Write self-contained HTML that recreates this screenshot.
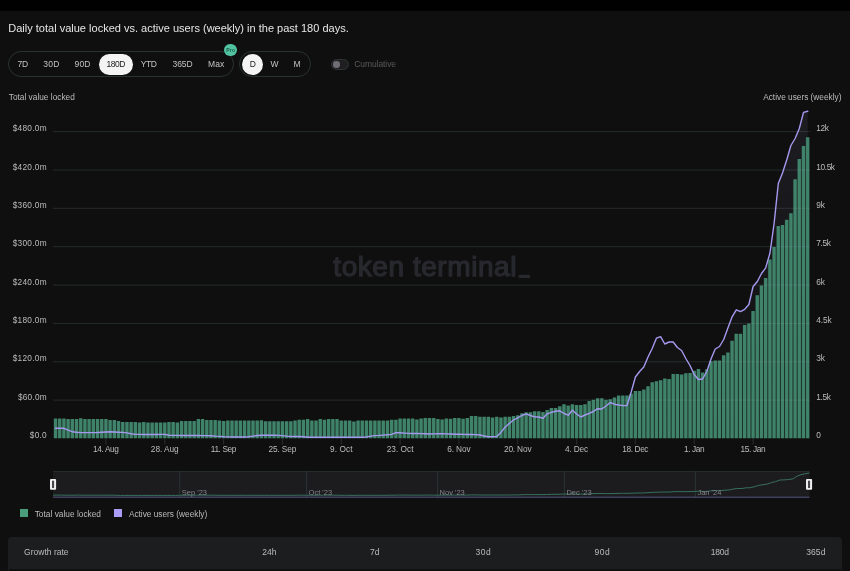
<!DOCTYPE html>
<html lang="en"><head><meta charset="utf-8"><title>Token Terminal – TVL vs active users</title>
<style>
html,body{margin:0;padding:0;background:#0f0f0f;}
body{width:850px;height:571px;position:relative;overflow:hidden;font-family:"Liberation Sans", sans-serif;}
.topbar{position:absolute;left:0;top:0;width:850px;height:10.6px;background:#010101;}
.t{position:absolute;white-space:nowrap;line-height:normal;font-family:"Liberation Sans", sans-serif;}
.chart{position:absolute;left:0;top:0;}
#t_wm{-webkit-text-stroke:1.25px #28292f;}
.labels{position:absolute;left:0;top:0;width:850px;height:571px;will-change:transform;transform:translateZ(0);}
.pill{position:absolute;box-sizing:border-box;border:1px solid #2a3232;border-radius:13px;}
.sel{position:absolute;background:#f4f4f4;border-radius:11px;}
.pro{position:absolute;left:223.7px;top:44.2px;width:13.7px;height:11.7px;border-radius:6px;background:#52c3a0;}
.toggle{position:absolute;left:331.2px;top:59.3px;width:17.6px;height:10.6px;box-sizing:border-box;border:1px solid #2c3534;border-radius:6px;background:#1f1f21;}
.knob{position:absolute;left:333.1px;top:61.3px;width:6.6px;height:6.6px;border-radius:50%;background:#706e74;}
.sq{position:absolute;top:508.9px;width:8px;height:8px;}
.table{position:absolute;left:8px;top:537px;width:834px;height:32px;background:#1c1d1f;border-radius:4px 4px 0 0;}
.sep{position:absolute;left:8px;top:569px;width:834px;height:4px;box-sizing:border-box;border-left:1px solid #1c1d1f;border-right:1px solid #1c1d1f;}
</style></head>
<body>
<div class="topbar"></div>
<svg class="chart" width="850" height="571" viewBox="0 0 850 571">
<defs><linearGradient id="ag" gradientUnits="userSpaceOnUse" x1="0" y1="111" x2="0" y2="438.5"><stop offset="0" stop-color="#b5b0e8" stop-opacity="0.085"/><stop offset="1" stop-color="#b5b0e8" stop-opacity="0"/></linearGradient></defs>
<path d="M55.5 428.3L59.7 428.3L63.9 428.3L68.1 430.2L72.3 431.7L76.5 432.2L80.7 432.6L84.9 432.6L89.1 432.6L93.3 432.6L97.5 432.5L101.7 432.2L105.9 432.0L110.1 431.8L114.3 432.0L118.5 432.2L122.7 432.4L126.9 432.9L131.1 433.7L135.3 434.4L139.5 434.4L143.7 434.5L147.9 434.5L152.2 434.5L156.4 434.5L160.6 434.4L164.8 434.4L169.0 435.2L173.2 435.4L177.4 435.4L181.6 435.5L185.8 435.5L190.0 435.5L194.2 435.5L198.4 435.5L202.6 435.6L206.8 435.6L211.0 435.7L215.2 436.1L219.4 436.4L223.6 436.7L227.8 436.9L232.0 437.0L236.2 437.0L240.4 437.0L244.6 437.0L248.8 436.7L253.0 436.1L257.2 435.5L261.4 435.3L265.6 435.2L269.8 435.2L274.0 435.2L278.2 435.4L282.4 435.6L286.6 436.1L290.8 436.5L295.0 436.5L299.2 436.5L303.4 436.8L307.6 437.2L311.8 437.2L316.0 437.2L320.2 437.2L324.4 437.2L328.6 437.2L332.8 437.3L337.0 437.3L341.3 437.3L345.5 437.3L349.7 437.3L353.9 437.3L358.1 437.3L362.3 437.3L366.5 437.0L370.7 436.1L374.9 435.6L379.1 435.4L383.3 435.1L387.5 434.8L391.7 434.4L395.9 432.6L400.1 432.8L404.3 433.1L408.5 433.4L412.7 433.5L416.9 433.5L421.1 433.6L425.3 433.8L429.5 434.0L433.7 433.9L437.9 433.8L442.1 433.8L446.3 433.9L450.5 434.0L454.7 434.2L458.9 434.2L463.1 434.4L467.3 434.5L471.5 434.5L475.7 434.6L479.9 435.0L484.1 436.0L488.3 436.7L492.5 436.8L496.7 436.6L500.9 432.4L505.1 427.3L509.3 423.5L513.5 420.0L517.7 417.8L521.9 415.5L526.1 413.8L530.4 415.5L534.6 416.9L538.8 417.0L543.0 418.3L547.2 413.8L551.4 412.4L555.6 411.3L559.8 410.8L564.0 413.5L568.2 415.2L572.4 410.3L576.6 414.0L580.8 417.0L585.0 415.0L589.2 413.3L593.4 411.5L597.6 408.7L601.8 409.0L606.0 406.0L610.2 402.5L614.4 404.2L618.6 405.0L622.8 405.6L627.0 405.5L631.2 392.0L635.4 377.0L639.6 371.5L643.8 367.0L648.0 357.0L652.2 348.5L656.4 338.2L660.6 336.6L664.8 344.0L669.0 342.0L673.2 342.0L677.4 347.5L681.6 350.5L685.8 358.5L690.0 365.5L694.2 374.5L698.4 379.5L702.6 379.0L706.8 371.5L711.0 359.0L715.2 349.0L719.5 346.5L723.7 339.5L727.9 328.0L732.1 316.8L736.3 309.8L740.5 311.6L744.7 309.3L748.9 304.5L753.1 286.5L757.3 281.5L761.5 273.5L765.7 267.8L769.9 253.3L774.1 223.5L778.3 183.5L782.5 173.0L786.7 160.0L790.9 145.5L795.1 138.5L799.3 128.5L803.5 112.4L807.7 111.3L807.7 438.5L55.5 438.5z" fill="url(#ag)"/>
<g class="bars"><path d="M53.85 438.3V418.9H57.60V418.9H61.80V418.9H66.01V419.5H70.21V419.5H74.41V419.5H78.61V418.7H82.82V419.5H87.02V419.5H91.22V419.5H95.42V419.5H99.62V419.5H103.83V419.5H108.03V420.4H112.23V420.4H116.43V421.5H120.64V422.4H124.84V422.4H129.04V422.4H133.24V422.4H137.44V423.0H141.65V422.4H145.85V423.0H150.05V423.0H154.25V423.0H158.46V423.0H162.66V423.0H166.86V422.4H171.06V422.4H175.26V423.0H179.47V421.5H183.67V421.5H187.87V421.5H192.07V421.5H196.28V419.5H200.48V419.5H204.68V420.4H208.88V420.4H213.08V420.4H217.29V421.0H221.49V421.5H225.69V420.9H229.89V420.9H234.10V420.9H238.30V420.9H242.50V420.9H246.70V420.9H250.90V420.9H255.11V420.9H259.31V420.7H263.51V421.6H267.71V421.6H271.92V421.6H276.12V421.6H280.32V421.6H284.52V421.6H288.72V421.6H292.93V420.9H297.13V420.2H301.33V420.2H305.53V419.5H309.74V420.9H313.94V420.9H318.14V419.5H322.34V420.2H326.54V419.5H330.75V419.5H334.95V419.5H339.15V420.9H343.35V420.9H347.56V420.9H351.76V421.9H355.96V420.9H360.16V420.9H364.36V420.9H368.57V420.9H372.77V420.9H376.97V420.9H381.17V420.9H385.38V420.9H389.58V420.2H393.78V420.2H397.98V419.0H402.18V419.0H406.39V419.0H410.59V419.0H414.79V419.8H418.99V419.0H423.20V418.3H427.40V418.3H431.60V418.3H435.80V419.3H440.00V419.8H444.21V419.0H448.41V419.2H452.61V418.5H456.81V418.5H461.02V419.2H465.22V418.5H469.42V416.3H473.62V416.3H477.82V417.2H482.03V417.2H486.23V417.2H490.43V417.8H494.63V417.2H498.84V417.8H503.04V417.2H507.24V417.2H511.44V416.3H515.64V415.6H519.85V413.6H524.05V412.7H528.25V412.7H532.45V411.6H536.66V411.6H540.86V412.5H545.06V410.5H549.26V408.5H553.46V408.5H557.67V406.7H561.87V404.6H566.07V406.0H570.27V404.6H574.48V405.3H578.68V405.3H582.88V404.6H587.08V401.5H591.28V400.1H595.49V398.6H599.69V398.6H603.89V400.1H608.09V399.7H612.30V397.9H616.50V395.9H620.70V395.9H624.90V395.9H629.10V394.1H633.31V391.4H637.51V391.4H641.71V390.0H645.91V386.6H650.12V382.7H654.32V381.6H658.52V380.6H662.72V378.8H666.92V379.5H671.13V374.3H675.33V374.3H679.53V375.0H683.73V373.6H687.94V373.3H692.14V371.1H696.34V369.4H700.54V372.9H704.74V369.7H708.95V361.7H713.15V361.0H717.35V361.0H721.55V355.7H725.76V353.0H729.96V341.1H734.16V334.1H738.36V334.1H742.56V325.4H746.77V324.0H750.97V311.4H755.17V295.6H759.37V285.8H763.58V278.5H767.78V259.8H771.98V247.5H776.18V226.5H780.38V225.5H784.59V220.2H788.79V213.6H792.99V179.7H797.19V159.3H801.40V146.4H805.60V137.7H809.35V438.3z" fill="#40836b" fill-opacity="0.2"/><path d="M53.85 438.3V418.5h3.3V438.3zM58.05 438.3V418.5h3.3V438.3zM62.26 438.3V418.5h3.3V438.3zM66.46 438.3V419.1h3.3V438.3zM70.66 438.3V419.1h3.3V438.3zM74.86 438.3V419.1h3.3V438.3zM79.06 438.3V418.3h3.3V438.3zM83.27 438.3V419.1h3.3V438.3zM87.47 438.3V419.1h3.3V438.3zM91.67 438.3V419.1h3.3V438.3zM95.87 438.3V419.1h3.3V438.3zM100.08 438.3V419.1h3.3V438.3zM104.28 438.3V419.1h3.3V438.3zM108.48 438.3V420.0h3.3V438.3zM112.68 438.3V420.0h3.3V438.3zM116.88 438.3V421.1h3.3V438.3zM121.09 438.3V422.0h3.3V438.3zM125.29 438.3V422.0h3.3V438.3zM129.49 438.3V422.0h3.3V438.3zM133.69 438.3V422.0h3.3V438.3zM137.90 438.3V422.6h3.3V438.3zM142.10 438.3V422.0h3.3V438.3zM146.30 438.3V422.6h3.3V438.3zM150.50 438.3V422.6h3.3V438.3zM154.70 438.3V422.6h3.3V438.3zM158.91 438.3V422.6h3.3V438.3zM163.11 438.3V422.6h3.3V438.3zM167.31 438.3V422.0h3.3V438.3zM171.51 438.3V422.0h3.3V438.3zM175.72 438.3V422.6h3.3V438.3zM179.92 438.3V421.1h3.3V438.3zM184.12 438.3V421.1h3.3V438.3zM188.32 438.3V421.1h3.3V438.3zM192.52 438.3V421.1h3.3V438.3zM196.73 438.3V419.1h3.3V438.3zM200.93 438.3V419.1h3.3V438.3zM205.13 438.3V420.0h3.3V438.3zM209.33 438.3V420.0h3.3V438.3zM213.54 438.3V420.0h3.3V438.3zM217.74 438.3V420.6h3.3V438.3zM221.94 438.3V421.1h3.3V438.3zM226.14 438.3V420.5h3.3V438.3zM230.34 438.3V420.5h3.3V438.3zM234.55 438.3V420.5h3.3V438.3zM238.75 438.3V420.5h3.3V438.3zM242.95 438.3V420.5h3.3V438.3zM247.15 438.3V420.5h3.3V438.3zM251.36 438.3V420.5h3.3V438.3zM255.56 438.3V420.5h3.3V438.3zM259.76 438.3V420.3h3.3V438.3zM263.96 438.3V421.2h3.3V438.3zM268.16 438.3V421.2h3.3V438.3zM272.37 438.3V421.2h3.3V438.3zM276.57 438.3V421.2h3.3V438.3zM280.77 438.3V421.2h3.3V438.3zM284.97 438.3V421.2h3.3V438.3zM289.18 438.3V421.2h3.3V438.3zM293.38 438.3V420.5h3.3V438.3zM297.58 438.3V419.8h3.3V438.3zM301.78 438.3V419.8h3.3V438.3zM305.98 438.3V419.1h3.3V438.3zM310.19 438.3V420.5h3.3V438.3zM314.39 438.3V420.5h3.3V438.3zM318.59 438.3V419.1h3.3V438.3zM322.79 438.3V419.8h3.3V438.3zM327.00 438.3V419.1h3.3V438.3zM331.20 438.3V419.1h3.3V438.3zM335.40 438.3V419.1h3.3V438.3zM339.60 438.3V420.5h3.3V438.3zM343.80 438.3V420.5h3.3V438.3zM348.01 438.3V420.5h3.3V438.3zM352.21 438.3V421.5h3.3V438.3zM356.41 438.3V420.5h3.3V438.3zM360.61 438.3V420.5h3.3V438.3zM364.82 438.3V420.5h3.3V438.3zM369.02 438.3V420.5h3.3V438.3zM373.22 438.3V420.5h3.3V438.3zM377.42 438.3V420.5h3.3V438.3zM381.62 438.3V420.5h3.3V438.3zM385.83 438.3V420.5h3.3V438.3zM390.03 438.3V419.8h3.3V438.3zM394.23 438.3V419.8h3.3V438.3zM398.43 438.3V418.6h3.3V438.3zM402.64 438.3V418.6h3.3V438.3zM406.84 438.3V418.6h3.3V438.3zM411.04 438.3V418.6h3.3V438.3zM415.24 438.3V419.4h3.3V438.3zM419.44 438.3V418.6h3.3V438.3zM423.65 438.3V417.9h3.3V438.3zM427.85 438.3V417.9h3.3V438.3zM432.05 438.3V417.9h3.3V438.3zM436.25 438.3V418.9h3.3V438.3zM440.46 438.3V419.4h3.3V438.3zM444.66 438.3V418.6h3.3V438.3zM448.86 438.3V418.8h3.3V438.3zM453.06 438.3V418.1h3.3V438.3zM457.26 438.3V418.1h3.3V438.3zM461.47 438.3V418.8h3.3V438.3zM465.67 438.3V418.1h3.3V438.3zM469.87 438.3V415.9h3.3V438.3zM474.07 438.3V415.9h3.3V438.3zM478.28 438.3V416.8h3.3V438.3zM482.48 438.3V416.8h3.3V438.3zM486.68 438.3V416.8h3.3V438.3zM490.88 438.3V417.4h3.3V438.3zM495.08 438.3V416.8h3.3V438.3zM499.29 438.3V417.4h3.3V438.3zM503.49 438.3V416.8h3.3V438.3zM507.69 438.3V416.8h3.3V438.3zM511.89 438.3V415.9h3.3V438.3zM516.10 438.3V415.2h3.3V438.3zM520.30 438.3V413.2h3.3V438.3zM524.50 438.3V412.3h3.3V438.3zM528.70 438.3V412.3h3.3V438.3zM532.90 438.3V411.2h3.3V438.3zM537.11 438.3V411.2h3.3V438.3zM541.31 438.3V412.1h3.3V438.3zM545.51 438.3V410.1h3.3V438.3zM549.71 438.3V408.1h3.3V438.3zM553.92 438.3V408.1h3.3V438.3zM558.12 438.3V406.3h3.3V438.3zM562.32 438.3V404.2h3.3V438.3zM566.52 438.3V405.6h3.3V438.3zM570.72 438.3V404.2h3.3V438.3zM574.93 438.3V404.9h3.3V438.3zM579.13 438.3V404.9h3.3V438.3zM583.33 438.3V404.2h3.3V438.3zM587.53 438.3V401.1h3.3V438.3zM591.74 438.3V399.7h3.3V438.3zM595.94 438.3V398.2h3.3V438.3zM600.14 438.3V398.2h3.3V438.3zM604.34 438.3V399.7h3.3V438.3zM608.54 438.3V399.3h3.3V438.3zM612.75 438.3V397.5h3.3V438.3zM616.95 438.3V395.5h3.3V438.3zM621.15 438.3V395.5h3.3V438.3zM625.35 438.3V395.5h3.3V438.3zM629.56 438.3V393.7h3.3V438.3zM633.76 438.3V391.0h3.3V438.3zM637.96 438.3V391.0h3.3V438.3zM642.16 438.3V389.6h3.3V438.3zM646.36 438.3V386.2h3.3V438.3zM650.57 438.3V382.3h3.3V438.3zM654.77 438.3V381.2h3.3V438.3zM658.97 438.3V380.2h3.3V438.3zM663.17 438.3V378.4h3.3V438.3zM667.38 438.3V379.1h3.3V438.3zM671.58 438.3V373.9h3.3V438.3zM675.78 438.3V373.9h3.3V438.3zM679.98 438.3V374.6h3.3V438.3zM684.18 438.3V373.2h3.3V438.3zM688.39 438.3V372.9h3.3V438.3zM692.59 438.3V370.7h3.3V438.3zM696.79 438.3V369.0h3.3V438.3zM700.99 438.3V372.5h3.3V438.3zM705.20 438.3V369.3h3.3V438.3zM709.40 438.3V361.3h3.3V438.3zM713.60 438.3V360.6h3.3V438.3zM717.80 438.3V360.6h3.3V438.3zM722.00 438.3V355.3h3.3V438.3zM726.21 438.3V352.6h3.3V438.3zM730.41 438.3V340.7h3.3V438.3zM734.61 438.3V333.7h3.3V438.3zM738.81 438.3V333.7h3.3V438.3zM743.02 438.3V325.0h3.3V438.3zM747.22 438.3V323.6h3.3V438.3zM751.42 438.3V311.0h3.3V438.3zM755.62 438.3V295.2h3.3V438.3zM759.82 438.3V285.4h3.3V438.3zM764.03 438.3V278.1h3.3V438.3zM768.23 438.3V259.4h3.3V438.3zM772.43 438.3V247.1h3.3V438.3zM776.63 438.3V226.1h3.3V438.3zM780.84 438.3V225.1h3.3V438.3zM785.04 438.3V219.8h3.3V438.3zM789.24 438.3V213.2h3.3V438.3zM793.44 438.3V179.3h3.3V438.3zM797.64 438.3V158.9h3.3V438.3zM801.85 438.3V146.0h3.3V438.3zM806.05 438.3V137.3h3.3V438.3z" fill="#40836b"/></g>
<g stroke="#8caab0" stroke-opacity="0.18" stroke-width="1" fill="none"><path d="M53 400.1H810"/><path d="M53 361.8H810"/><path d="M53 323.4H810"/><path d="M53 285.1H810"/><path d="M53 246.7H810"/><path d="M53 208.3H810"/><path d="M53 170.0H810"/><path d="M53 131.6H810"/></g>
<g stroke="#2a2e30" stroke-width="1" fill="none"><path d="M105.9 438.5v6"/><path d="M164.8 438.5v6"/><path d="M223.6 438.5v6"/><path d="M282.4 438.5v6"/><path d="M341.3 438.5v6"/><path d="M400.1 438.5v6"/><path d="M458.9 438.5v6"/><path d="M517.7 438.5v6"/><path d="M576.6 438.5v6"/><path d="M635.4 438.5v6"/><path d="M694.2 438.5v6"/><path d="M753.1 438.5v6"/></g>
<path d="M55.5 428.3L59.7 428.3L63.9 428.3L68.1 430.2L72.3 431.7L76.5 432.2L80.7 432.6L84.9 432.6L89.1 432.6L93.3 432.6L97.5 432.5L101.7 432.2L105.9 432.0L110.1 431.8L114.3 432.0L118.5 432.2L122.7 432.4L126.9 432.9L131.1 433.7L135.3 434.4L139.5 434.4L143.7 434.5L147.9 434.5L152.2 434.5L156.4 434.5L160.6 434.4L164.8 434.4L169.0 435.2L173.2 435.4L177.4 435.4L181.6 435.5L185.8 435.5L190.0 435.5L194.2 435.5L198.4 435.5L202.6 435.6L206.8 435.6L211.0 435.7L215.2 436.1L219.4 436.4L223.6 436.7L227.8 436.9L232.0 437.0L236.2 437.0L240.4 437.0L244.6 437.0L248.8 436.7L253.0 436.1L257.2 435.5L261.4 435.3L265.6 435.2L269.8 435.2L274.0 435.2L278.2 435.4L282.4 435.6L286.6 436.1L290.8 436.5L295.0 436.5L299.2 436.5L303.4 436.8L307.6 437.2L311.8 437.2L316.0 437.2L320.2 437.2L324.4 437.2L328.6 437.2L332.8 437.3L337.0 437.3L341.3 437.3L345.5 437.3L349.7 437.3L353.9 437.3L358.1 437.3L362.3 437.3L366.5 437.0L370.7 436.1L374.9 435.6L379.1 435.4L383.3 435.1L387.5 434.8L391.7 434.4L395.9 432.6L400.1 432.8L404.3 433.1L408.5 433.4L412.7 433.5L416.9 433.5L421.1 433.6L425.3 433.8L429.5 434.0L433.7 433.9L437.9 433.8L442.1 433.8L446.3 433.9L450.5 434.0L454.7 434.2L458.9 434.2L463.1 434.4L467.3 434.5L471.5 434.5L475.7 434.6L479.9 435.0L484.1 436.0L488.3 436.7L492.5 436.8L496.7 436.6L500.9 432.4L505.1 427.3L509.3 423.5L513.5 420.0L517.7 417.8L521.9 415.5L526.1 413.8L530.4 415.5L534.6 416.9L538.8 417.0L543.0 418.3L547.2 413.8L551.4 412.4L555.6 411.3L559.8 410.8L564.0 413.5L568.2 415.2L572.4 410.3L576.6 414.0L580.8 417.0L585.0 415.0L589.2 413.3L593.4 411.5L597.6 408.7L601.8 409.0L606.0 406.0L610.2 402.5L614.4 404.2L618.6 405.0L622.8 405.6L627.0 405.5L631.2 392.0L635.4 377.0L639.6 371.5L643.8 367.0L648.0 357.0L652.2 348.5L656.4 338.2L660.6 336.6L664.8 344.0L669.0 342.0L673.2 342.0L677.4 347.5L681.6 350.5L685.8 358.5L690.0 365.5L694.2 374.5L698.4 379.5L702.6 379.0L706.8 371.5L711.0 359.0L715.2 349.0L719.5 346.5L723.7 339.5L727.9 328.0L732.1 316.8L736.3 309.8L740.5 311.6L744.7 309.3L748.9 304.5L753.1 286.5L757.3 281.5L761.5 273.5L765.7 267.8L769.9 253.3L774.1 223.5L778.3 183.5L782.5 173.0L786.7 160.0L790.9 145.5L795.1 138.5L799.3 128.5L803.5 112.4L807.7 111.3" fill="none" stroke="#a599ef" stroke-width="1.4" stroke-linejoin="round" stroke-linecap="round"/>
<rect x="53.0" y="471.0" width="756.5" height="27.0" fill="#1c1c1f"/>
<path d="M53.0 471.5H809.5" stroke="#262b2c" stroke-width="1"/>
<g stroke="#2b3433" stroke-width="1" fill="none"><path d="M179.8 471.0V498.0"/><path d="M306.6 471.0V498.0"/><path d="M437.6 471.0V498.0"/><path d="M564.4 471.0V498.0"/><path d="M695.4 471.0V498.0"/></g>
<path d="M53.0 495.1L57.2 495.1L61.5 495.1L65.7 495.2L69.9 495.2L74.1 495.2L78.4 495.1L82.6 495.2L86.8 495.2L91.0 495.2L95.3 495.2L99.5 495.2L103.7 495.2L107.9 495.2L112.2 495.2L116.4 495.3L120.6 495.4L124.8 495.4L129.1 495.4L133.3 495.4L137.5 495.4L141.8 495.4L146.0 495.4L150.2 495.4L154.4 495.4L158.7 495.4L162.9 495.4L167.1 495.4L171.3 495.4L175.6 495.4L179.8 495.3L184.0 495.3L188.2 495.3L192.5 495.3L196.7 495.2L200.9 495.2L205.1 495.2L209.4 495.2L213.6 495.2L217.8 495.3L222.1 495.3L226.3 495.3L230.5 495.3L234.7 495.3L239.0 495.3L243.2 495.3L247.4 495.3L251.6 495.3L255.9 495.3L260.1 495.3L264.3 495.3L268.5 495.3L272.8 495.3L277.0 495.3L281.2 495.3L285.4 495.3L289.7 495.3L293.9 495.3L298.1 495.2L302.3 495.2L306.6 495.2L310.8 495.3L315.0 495.3L319.3 495.2L323.5 495.2L327.7 495.2L331.9 495.2L336.2 495.2L340.4 495.3L344.6 495.3L348.8 495.3L353.1 495.4L357.3 495.3L361.5 495.3L365.7 495.3L370.0 495.3L374.2 495.3L378.4 495.3L382.6 495.3L386.9 495.3L391.1 495.2L395.3 495.2L399.6 495.1L403.8 495.1L408.0 495.1L412.2 495.1L416.5 495.2L420.7 495.1L424.9 495.1L429.1 495.1L433.4 495.1L437.6 495.2L441.8 495.2L446.0 495.1L450.3 495.1L454.5 495.1L458.7 495.1L462.9 495.1L467.2 495.1L471.4 494.9L475.6 494.9L479.9 495.0L484.1 495.0L488.3 495.0L492.5 495.0L496.8 495.0L501.0 495.0L505.2 495.0L509.4 495.0L513.7 494.9L517.9 494.9L522.1 494.7L526.3 494.6L530.6 494.6L534.8 494.6L539.0 494.6L543.2 494.6L547.5 494.5L551.7 494.3L555.9 494.3L560.2 494.2L564.4 494.0L568.6 494.1L572.8 494.0L577.1 494.1L581.3 494.1L585.5 494.0L589.7 493.8L594.0 493.6L598.2 493.5L602.4 493.5L606.6 493.6L610.9 493.6L615.1 493.5L619.3 493.3L623.5 493.3L627.8 493.3L632.0 493.2L636.2 493.0L640.4 493.0L644.7 492.9L648.9 492.6L653.1 492.3L657.4 492.2L661.6 492.1L665.8 492.0L670.0 492.0L674.3 491.6L678.5 491.6L682.7 491.7L686.9 491.6L691.2 491.5L695.4 491.4L699.6 491.2L703.8 491.5L708.1 491.3L712.3 490.6L716.5 490.6L720.7 490.6L725.0 490.2L729.2 489.9L733.4 489.0L737.7 488.5L741.9 488.5L746.1 487.8L750.3 487.7L754.6 486.7L758.8 485.4L763.0 484.7L767.2 484.1L771.5 482.6L775.7 481.6L779.9 480.0L784.1 479.9L788.4 479.5L792.6 479.0L796.8 476.3L801.0 474.7L805.3 473.7L809.5 473.0" fill="none" stroke="#37705c" stroke-width="1"/>
<path d="M53.0 497.2H809.5" stroke="#50527a" stroke-width="1"/>
<rect x="50.0" y="479" width="6.1" height="10.8" rx="1" fill="#efefef"/><rect x="52.0" y="480.7" width="2.1" height="7.3" fill="#48484c"/><rect x="806.0" y="479" width="6.1" height="10.8" rx="1" fill="#efefef"/><rect x="808.0" y="480.7" width="2.1" height="7.3" fill="#48484c"/>
</svg>
<div class="pill" style="left:8.2px;top:51.4px;width:226px;height:26.1px"></div>
<div class="sel" style="left:98.8px;top:53.9px;width:34.2px;height:21px"></div>
<div class="pill" style="left:239px;top:51.4px;width:71.8px;height:26.1px"></div>
<div class="sel" style="left:242px;top:53.9px;width:20.9px;height:21px"></div>
<div class="pro"></div>
<div class="toggle"></div><div class="knob"></div>
<div class="sq" style="left:19.9px;background:#4a9c7c"></div>
<div class="sq" style="left:114.1px;background:#a99df5"></div>
<div class="table"></div><div class="sep"></div>
<div class="labels">
<span class="t" style="left:519.1px;top:253.6px;font-size:19.4px;transform-origin:0 20.8px;transform:scaleY(2.6);color:#28292f">_</span>
<span id="t_title" class="t" style="left:8.20px;top:22.05px;font-size:11px;font-weight:400;color:#e6e6e6;letter-spacing:0.009px">Daily total value locked vs. active users (weekly) in the past 180 days.</span>
<span id="t_b7" class="t" style="left:17.60px;top:59.21px;font-size:8.5px;font-weight:400;color:#c2c2c2;letter-spacing:-0.275px">7D</span>
<span id="t_b30" class="t" style="left:43.30px;top:59.21px;font-size:8.5px;font-weight:400;color:#c2c2c2;letter-spacing:0.203px">30D</span>
<span id="t_b90" class="t" style="left:74.50px;top:59.21px;font-size:8.5px;font-weight:400;color:#c2c2c2;letter-spacing:0.153px">90D</span>
<span id="t_b180" class="t" style="left:106.50px;top:59.21px;font-size:8.5px;font-weight:400;color:#1a1a1a;letter-spacing:-0.509px">180D</span>
<span id="t_bytd" class="t" style="left:140.80px;top:59.21px;font-size:8.5px;font-weight:400;color:#c2c2c2;letter-spacing:-0.400px">YTD</span>
<span id="t_b365" class="t" style="left:172.60px;top:59.21px;font-size:8.5px;font-weight:400;color:#c2c2c2;letter-spacing:-0.109px">365D</span>
<span id="t_bmax" class="t" style="left:208.10px;top:59.21px;font-size:8.5px;font-weight:400;color:#c2c2c2;letter-spacing:0.019px">Max</span>
<span id="t_bD" class="t" style="left:249.80px;top:59.21px;font-size:8.5px;font-weight:400;color:#1a1a1a;letter-spacing:0.000px">D</span>
<span id="t_bW" class="t" style="left:270.50px;top:59.21px;font-size:8.5px;font-weight:400;color:#c2c2c2;letter-spacing:0.000px">W</span>
<span id="t_bM" class="t" style="left:293.50px;top:59.21px;font-size:8.5px;font-weight:400;color:#c2c2c2;letter-spacing:0.000px">M</span>
<span id="t_pro" class="t" style="left:226.30px;top:47.38px;font-size:5.0px;font-weight:700;color:#1a5b47;letter-spacing:0.178px">Pro</span>
<span id="t_cum" class="t" style="left:354.20px;top:58.61px;font-size:8.5px;font-weight:400;color:#59595d;letter-spacing:-0.070px">Cumulative</span>
<span id="t_tvl" class="t" style="left:8.75px;top:92.29px;font-size:8.3px;font-weight:400;color:#bcbcbc;letter-spacing:0.005px">Total value locked</span>
<span id="t_au" class="t" style="left:763.20px;top:92.29px;font-size:8.3px;font-weight:400;color:#bcbcbc;letter-spacing:-0.005px">Active users (weekly)</span>
<span id="t_lg1" class="t" style="left:34.70px;top:508.59px;font-size:8.3px;font-weight:400;color:#bcbcbc;letter-spacing:0.019px">Total value locked</span>
<span id="t_lg2" class="t" style="left:128.90px;top:508.59px;font-size:8.3px;font-weight:400;color:#bcbcbc;letter-spacing:-0.005px">Active users (weekly)</span>
<span id="t_gr" class="t" style="left:24.10px;top:547.11px;font-size:8.5px;font-weight:400;color:#bcbcbc;letter-spacing:0.009px">Growth rate</span>
<span id="t_c24" class="t" style="left:262.30px;top:547.11px;font-size:8.5px;font-weight:400;color:#bcbcbc;letter-spacing:-0.044px">24h</span>
<span id="t_c7" class="t" style="left:370.00px;top:547.11px;font-size:8.5px;font-weight:400;color:#bcbcbc;letter-spacing:0.031px">7d</span>
<span id="t_c30" class="t" style="left:475.50px;top:547.11px;font-size:8.5px;font-weight:400;color:#bcbcbc;letter-spacing:0.556px">30d</span>
<span id="t_c90" class="t" style="left:594.50px;top:547.11px;font-size:8.5px;font-weight:400;color:#bcbcbc;letter-spacing:0.556px">90d</span>
<span id="t_c180" class="t" style="left:710.70px;top:547.11px;font-size:8.5px;font-weight:400;color:#bcbcbc;letter-spacing:-0.207px">180d</span>
<span id="t_c365" class="t" style="left:806.20px;top:547.11px;font-size:8.5px;font-weight:400;color:#bcbcbc;letter-spacing:0.093px">365d</span>
<span id="t_wm" class="t" style="left:333.30px;top:250.66px;font-size:28px;font-weight:400;color:#28292f;letter-spacing:0.556px">token terminal</span>
<span id="t_yl0" class="t" style="left:29.80px;top:430.09px;font-size:8.3px;font-weight:400;color:#bcbcbc;letter-spacing:0.215px">$0.0</span>
<span id="t_yl1" class="t" style="left:18.00px;top:391.73px;font-size:8.3px;font-weight:400;color:#bcbcbc;letter-spacing:0.183px">$60.0m</span>
<span id="t_yl2" class="t" style="left:12.70px;top:353.36px;font-size:8.3px;font-weight:400;color:#bcbcbc;letter-spacing:0.267px">$120.0m</span>
<span id="t_yl3" class="t" style="left:12.70px;top:315.00px;font-size:8.3px;font-weight:400;color:#bcbcbc;letter-spacing:0.267px">$180.0m</span>
<span id="t_yl4" class="t" style="left:12.70px;top:276.64px;font-size:8.3px;font-weight:400;color:#bcbcbc;letter-spacing:0.267px">$240.0m</span>
<span id="t_yl5" class="t" style="left:12.70px;top:238.28px;font-size:8.3px;font-weight:400;color:#bcbcbc;letter-spacing:0.267px">$300.0m</span>
<span id="t_yl6" class="t" style="left:12.70px;top:199.91px;font-size:8.3px;font-weight:400;color:#bcbcbc;letter-spacing:0.267px">$360.0m</span>
<span id="t_yl7" class="t" style="left:12.70px;top:161.55px;font-size:8.3px;font-weight:400;color:#bcbcbc;letter-spacing:0.267px">$420.0m</span>
<span id="t_yl8" class="t" style="left:12.70px;top:123.19px;font-size:8.3px;font-weight:400;color:#bcbcbc;letter-spacing:0.267px">$480.0m</span>
<span id="t_yr0" class="t" style="left:816.30px;top:430.09px;font-size:8.3px;font-weight:400;color:#bcbcbc;letter-spacing:0.000px">0</span>
<span id="t_yr1" class="t" style="left:816.30px;top:391.73px;font-size:8.3px;font-weight:400;color:#bcbcbc;letter-spacing:-0.400px">1.5k</span>
<span id="t_yr2" class="t" style="left:816.30px;top:353.36px;font-size:8.3px;font-weight:400;color:#bcbcbc;letter-spacing:-0.266px">3k</span>
<span id="t_yr3" class="t" style="left:816.30px;top:315.00px;font-size:8.3px;font-weight:400;color:#bcbcbc;letter-spacing:-0.129px">4.5k</span>
<span id="t_yr4" class="t" style="left:816.30px;top:276.64px;font-size:8.3px;font-weight:400;color:#bcbcbc;letter-spacing:-0.266px">6k</span>
<span id="t_yr5" class="t" style="left:816.30px;top:238.28px;font-size:8.3px;font-weight:400;color:#bcbcbc;letter-spacing:-0.396px">7.5k</span>
<span id="t_yr6" class="t" style="left:816.30px;top:199.91px;font-size:8.3px;font-weight:400;color:#bcbcbc;letter-spacing:-0.266px">9k</span>
<span id="t_yr7" class="t" style="left:816.30px;top:161.55px;font-size:8.3px;font-weight:400;color:#bcbcbc;letter-spacing:-0.400px">10.5k</span>
<span id="t_yr8" class="t" style="left:816.30px;top:123.19px;font-size:8.3px;font-weight:400;color:#bcbcbc;letter-spacing:-0.400px">12k</span>
<span id="t_x12" class="t" style="left:92.88px;top:444.29px;font-size:8.3px;font-weight:400;color:#bcbcbc;letter-spacing:-0.343px">14. Aug</span>
<span id="t_x26" class="t" style="left:150.86px;top:444.29px;font-size:8.3px;font-weight:400;color:#bcbcbc;letter-spacing:-0.059px">28. Aug</span>
<span id="t_x40" class="t" style="left:210.79px;top:444.29px;font-size:8.3px;font-weight:400;color:#bcbcbc;letter-spacing:-0.400px">11. Sep</span>
<span id="t_x54" class="t" style="left:268.57px;top:444.29px;font-size:8.3px;font-weight:400;color:#bcbcbc;letter-spacing:-0.152px">25. Sep</span>
<span id="t_x68" class="t" style="left:330.00px;top:444.29px;font-size:8.3px;font-weight:400;color:#bcbcbc;letter-spacing:0.072px">9. Oct</span>
<span id="t_x82" class="t" style="left:386.68px;top:444.29px;font-size:8.3px;font-weight:400;color:#bcbcbc;letter-spacing:0.008px">23. Oct</span>
<span id="t_x96" class="t" style="left:447.16px;top:444.29px;font-size:8.3px;font-weight:400;color:#bcbcbc;letter-spacing:-0.097px">6. Nov</span>
<span id="t_x110" class="t" style="left:503.95px;top:444.29px;font-size:8.3px;font-weight:400;color:#bcbcbc;letter-spacing:-0.166px">20. Nov</span>
<span id="t_x124" class="t" style="left:565.03px;top:444.29px;font-size:8.3px;font-weight:400;color:#bcbcbc;letter-spacing:-0.177px">4. Dec</span>
<span id="t_x138" class="t" style="left:622.31px;top:444.29px;font-size:8.3px;font-weight:400;color:#bcbcbc;letter-spacing:-0.399px">18. Dec</span>
<span id="t_x152" class="t" style="left:683.93px;top:444.29px;font-size:8.3px;font-weight:400;color:#bcbcbc;letter-spacing:-0.400px">1. Jan</span>
<span id="t_x166" class="t" style="left:740.62px;top:444.29px;font-size:8.3px;font-weight:400;color:#bcbcbc;letter-spacing:-0.386px">15. Jan</span>
<span id="t_n30" class="t" style="left:181.79px;top:488.41px;font-size:7.5px;font-weight:400;color:#85858a;letter-spacing:0.000px">Sep '23</span>
<span id="t_n60" class="t" style="left:308.58px;top:488.41px;font-size:7.5px;font-weight:400;color:#85858a;letter-spacing:0.000px">Oct '23</span>
<span id="t_n91" class="t" style="left:439.59px;top:488.41px;font-size:7.5px;font-weight:400;color:#85858a;letter-spacing:0.000px">Nov '23</span>
<span id="t_n121" class="t" style="left:566.38px;top:488.41px;font-size:7.5px;font-weight:400;color:#85858a;letter-spacing:0.000px">Dec '23</span>
<span id="t_n152" class="t" style="left:697.39px;top:488.41px;font-size:7.5px;font-weight:400;color:#85858a;letter-spacing:0.000px">Jan '24</span>
</div>
</body></html>
